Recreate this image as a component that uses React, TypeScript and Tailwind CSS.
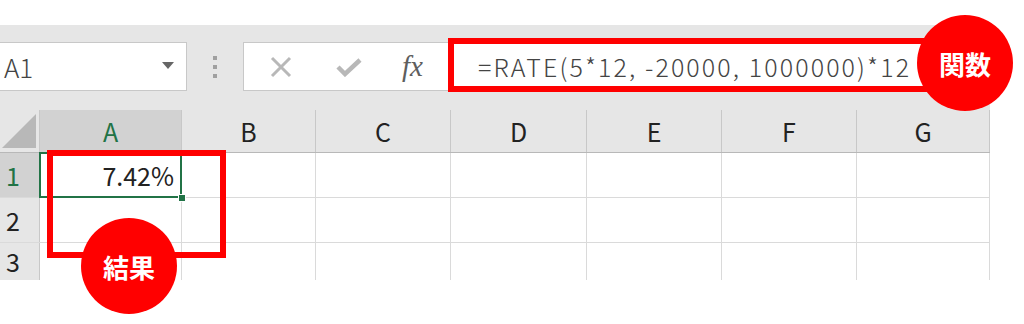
const cols = [
  { name: "A", w: "w-[142px]" },
  { name: "B", w: "w-[134px]" },
  { name: "C", w: "w-[135px]" },
  { name: "D", w: "w-[136px]" },
  { name: "E", w: "w-[135px]" },
  { name: "F", w: "w-[135px]" },
  { name: "G", w: "w-[133px]" },
];

const rows = [
  { n: "1", h: "h-[45px]" },
  { n: "2", h: "h-[45px]" },
  { n: "3", h: "h-[37px]" },
];

const Toolbar = () => (
  <div className="flex h-[85px] w-[990px] items-start bg-[#e6e6e6] pt-[17px]">
    {/* Name box */}
    <div className="flex h-[49px] w-[187px] items-center justify-between border border-l-0 border-[#c8c8c8] bg-white pl-[4px] pr-[12px]">
      <span className="text-[26px] font-light leading-none text-[#444]">A1</span>
      <svg width="12" height="8" viewBox="0 0 12 8" className="mb-[2px]">
        <path d="M0 0h12L6 7z" fill="#666" />
      </svg>
    </div>

    {/* Dots */}
    <div className="flex h-[49px] w-[56px] flex-col items-center justify-center gap-[5px]">
      <div className="h-[4px] w-[4px] bg-[#a0a0a0]" />
      <div className="h-[4px] w-[4px] bg-[#a0a0a0]" />
      <div className="h-[4px] w-[4px] bg-[#a0a0a0]" />
    </div>

    {/* Formula bar */}
    <div className="flex h-[49px] w-[742px] items-center border border-[#c8c8c8] bg-white">
      <div className="flex w-[205px] items-center">
        <svg width="22" height="22" viewBox="0 0 22 22" className="ml-[26px]">
          <path d="M2 2l18 18M20 2L2 20" stroke="#b8b8b8" strokeWidth="3" />
        </svg>
        <svg width="26" height="20" viewBox="0 0 26 20" className="ml-[44px]">
          <path d="M2 10l7 7L24 3" stroke="#b8b8b8" strokeWidth="4.5" fill="none" />
        </svg>
        <span className="ml-[40px] font-['Liberation_Serif',serif] text-[29px] italic leading-none text-[#5e5e5e]">
          fx
        </span>
      </div>
      <span className="ml-[29px] whitespace-nowrap text-[25px] font-light leading-none tracking-[2.1px] text-[#444]">
        =RATE(5*12, -20000, 1000000)*12
      </span>
    </div>
  </div>
);

const Grid = () => (
  <div className="w-[990px]">
    {/* Header row */}
    <div className="flex h-[43px] border-b border-[#b8b8b8] bg-[#e6e6e6]">
      <div className="flex w-[40px] items-end justify-end border-r border-[#c8c8c8]">
        <svg width="36" height="36" viewBox="0 0 36 36" className="mb-[3px] mr-[2px]">
          <path d="M1 35H35V1z" fill="#b8b8b8" />
        </svg>
      </div>
      {cols.map((c, i) => (
        <div
          key={c.name}
          className={`${c.w} flex items-center justify-center border-r border-[#c8c8c8] text-[25px] leading-none ${
            i === 0 ? "bg-[#d2d2d2] text-[#217346]" : "text-[#222]"
          }`}
        >
          {c.name}
        </div>
      ))}
    </div>

    {rows.map((r, ri) => (
      <div key={r.n} className={`flex ${r.h} ${ri < 2 ? "border-b border-[#dadada]" : ""}`}>
        <div
          className={`flex w-[40px] items-center border-r border-[#c8c8c8] pl-[6px] text-[25px] leading-none ${
            ri === 0 ? "bg-[#d2d2d2] text-[#217346]" : "bg-[#e6e6e6] text-[#222]"
          }`}
        >
          {r.n}
        </div>
        {cols.map((c, ci) => (
          <div
            key={c.name}
            className={`${c.w} relative border-r border-[#dadada] ${ri === 0 && ci === 0 ? "z-10" : ""}`}
          >
            {ri === 0 && ci === 0 && (
              <>
                <div className="absolute -left-[1px] -top-[1px] bottom-[-1px] right-[-1px] border-2 border-[#217346]" />
                <div className="absolute -bottom-[5px] -right-[5px] h-[8px] w-[8px] border border-white bg-[#217346]" />
                <div className="flex h-full items-center justify-end pr-[7px] text-[25px] leading-none text-[#222]">
                  7.42%
                </div>
              </>
            )}
          </div>
        ))}
      </div>
    ))}
  </div>
);

export default function App() {
  return (
    <div className="relative h-[324px] w-[1024px] overflow-hidden bg-white font-['Noto_Sans_CJK_JP','Noto_Sans',sans-serif]">
      <div className="h-[25px]" />
      <Toolbar />
      <Grid />

      {/* Annotation: function */}
      <div className="absolute left-[448px] top-[38px] z-20 h-[54px] w-[482px] border-[6px] border-[#ff0000]" />
      <div className="absolute left-[917px] top-[15px] z-20 flex h-[96px] w-[96px] items-center justify-center rounded-full bg-[#ff0000] text-[26px] font-bold text-white">
        関数
      </div>

      {/* Annotation: result */}
      <div className="absolute left-[47px] top-[150px] z-20 h-[108px] w-[179px] border-[6px] border-[#ff0000]" />
      <div className="absolute left-[81px] top-[218px] z-20 flex h-[96px] w-[96px] items-center justify-center rounded-full bg-[#ff0000] text-[26px] font-bold text-white">
        結果
      </div>
    </div>
  );
}
